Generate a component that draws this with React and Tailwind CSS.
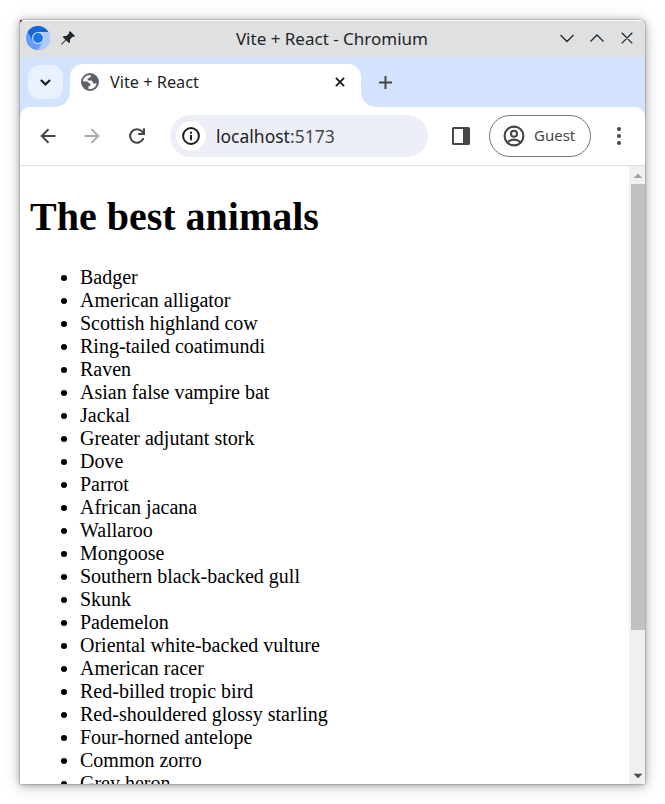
import React from "react";

const animals = [
  "Badger", "American alligator", "Scottish highland cow", "Ring-tailed coatimundi",
  "Raven", "Asian false vampire bat", "Jackal", "Greater adjutant stork", "Dove",
  "Parrot", "African jacana", "Wallaroo", "Mongoose", "Southern black-backed gull",
  "Skunk", "Pademelon", "Oriental white-backed vulture", "American racer",
  "Red-billed tropic bird", "Red-shouldered glossy starling", "Four-horned antelope",
  "Common zorro", "Grey heron",
];

function ChromiumLogo() {
  return (
    <svg width="24" height="24" viewBox="0 0 24 24">
      <circle cx="12" cy="12" r="12" fill="#669df6" />
      <path d="M12 12 17.2 15 12 24A12 12 0 0 0 22.4 6H12Z" fill="#aecbfa" />
      <path d="M12 12 6.8 15 1.6 6A12 12 0 0 1 22.4 6H12Z" fill="#1967d2" />
      <circle cx="12" cy="12" r="6" fill="#d2e3fc" />
      <circle cx="12" cy="12" r="4.9" fill="#1a73e8" />
    </svg>
  );
}

function PinIcon() {
  return (
    <svg width="14" height="14" viewBox="0 0 14 14" fill="#232629">
      <path d="M9 0 14 5 12.6 6.1 11.6 5.8 8.9 8.6 9 11.2 8 12.2 5.1 9.3 1 13.4 0 13.8 .4 12.8 4.4 8.7 1.7 6 2.8 5 5.4 5.1 8.2 2.3 7.9 1.2Z" />
    </svg>
  );
}

function GlobeIcon() {
  return (
    <svg width="18" height="18" viewBox="0 0 18 18">
      <circle cx="9" cy="9" r="9" fill="#5f6368" />
      <path d="M2 8.2A7 7 0 0 1 9.6 2V4.2L6.6 5.4V7.6H10.4L12 9.4V10.6H15.8A7 7 0 0 1 7.4 15.8V13.4L9.4 12.8V10.8L7.4 9.6 6.2 8.4Z" fill="#fff" />
    </svg>
  );
}

function Arrow({ className }) {
  return (
    <svg width="16" height="16" viewBox="0 0 16 16" fill="none" stroke="currentColor" strokeWidth="2" className={className}>
      <path d="M15.5 8H2M8.5 1.2 1.7 8l6.8 6.8" />
    </svg>
  );
}

function ReloadIcon() {
  return (
    <svg width="16" height="16" viewBox="0 0 16 16" fill="none" stroke="currentColor" strokeWidth="2.1">
      <path d="M14.4 10.2A6.8 6.8 0 1 1 13 3.4L14.6 5.2M15 .3V6H9.2" />
    </svg>
  );
}

function InfoIcon() {
  return (
    <svg width="18" height="18" viewBox="0 0 18 18" fill="none" stroke="#1f1f1f" strokeWidth="2">
      <circle cx="9" cy="9" r="7.9" />
      <path d="M9 8v5.2M9 4.8v1.9" />
    </svg>
  );
}

function TitleBar() {
  return (
    <div className="flex h-[37px] shrink-0 items-center border-t border-[#f8f8f8] bg-[#dee0e2] pb-0.5 pl-1.5 pr-[11px]">
      <ChromiumLogo />
      <div className="ml-[11px] mr-auto"><PinIcon /></div>
      <div className="mr-[132px] whitespace-nowrap pt-0.5 text-[17px] leading-6 text-[#232629]">Vite + React - Chromium</div>
      <svg width="74" height="14" viewBox="0 0 74 14" fill="none" stroke="#232629" strokeWidth="1.25">
        <path d="M.5 4 7 10.5 13.5 4M30.5 10.5 37 4l6.5 6.5M61.7 1.8l10.6 10.6M72.3 1.8 61.7 12.4" />
      </svg>
    </div>
  );
}

function Flare({ flip }) {
  return (
    <svg width="15" height="15" viewBox="0 0 15 15" className={flip ? "-scale-x-100" : ""}>
      <path d="M15 0v15H0A15 15 0 0 0 15 0Z" fill="#fff" />
    </svg>
  );
}

function TabStrip() {
  return (
    <div className="flex h-[50px] shrink-0 items-end bg-[#d3e3fd] pl-2">
      <div className="mb-2 flex h-[34px] w-[35px] items-center justify-center rounded-xl bg-[#eaf1fe]">
        <svg width="11" height="7" viewBox="0 0 11 7" fill="none" stroke="#1f1f1f" strokeWidth="2.2">
          <path d="M.9 1 5.5 5.4 10.1 1" />
        </svg>
      </div>
      <div className="-ml-2"><Flare /></div>
      <div className="flex h-[43px] w-[291px] items-center rounded-t-[13px] bg-white pb-[7px] pl-[11px] pr-[16px]">
        <GlobeIcon />
        <span className="ml-[11px] flex-1 text-[16.3px] leading-5 text-[#1f1f1f]">Vite + React</span>
        <svg width="10" height="10" viewBox="0 0 11 11" fill="none" stroke="#1f1f1f" strokeWidth="2.1">
          <path d="m1 1 9 9M10 1 1 10" />
        </svg>
      </div>
      <Flare flip />
      <svg width="13" height="13" viewBox="0 0 13 13" className="mb-[18px] ml-[3px]" stroke="#474747" strokeWidth="2">
        <path d="M6.5 0v13M0 6.5h13" />
      </svg>
    </div>
  );
}

function Toolbar() {
  return (
    <div className="shrink-0 bg-[#d3e3fd]">
      <div className="flex h-[59px] items-center rounded-t-[10px] border-b border-[#dddee0] bg-white pl-5 text-[#474747]">
        <Arrow />
        <Arrow className="ml-7 -scale-x-100 text-[#ababab]" />
        <div className="ml-[29px]"><ReloadIcon /></div>
        <div className="ml-[25px] flex h-[42px] w-[258px] items-center rounded-full bg-[#eceef8] pl-1.5">
          <div className="flex h-[30px] w-[30px] items-center justify-center rounded-full bg-white">
            <InfoIcon />
          </div>
          <span className="ml-2.5 text-[17.5px] leading-6 text-[#1f1f1f]">localhost<span className="text-[#474747]">:5173</span></span>
        </div>
        <svg width="18" height="18" viewBox="0 0 18 18" className="ml-6">
          <path fillRule="evenodd" fill="#474747" d="M1.5 0h15Q18 0 18 1.5v15q0 1.5-1.5 1.5h-15Q0 18 0 16.5v-15Q0 0 1.5 0ZM2 2v14h9V2Z" />
        </svg>
        <div className="ml-[19px] flex h-[42px] w-[102px] items-center rounded-full border border-[#747775] pl-3">
          <svg width="24" height="24" viewBox="0 0 24 24" fill="none" stroke="#474747" strokeWidth="2.1">
            <circle cx="12" cy="12" r="9.4" />
            <circle cx="12" cy="9.8" r="3" />
            <path d="M5.3 18.4Q12 13 18.7 18.4" />
          </svg>
          <span className="mb-0.5 ml-2 text-[15px] leading-5">Guest</span>
        </div>
        <svg width="4" height="18" viewBox="0 0 4 18" className="ml-[26px]" fill="#474747">
          <circle cx="2" cy="2" r="2" /><circle cx="2" cy="9" r="2" /><circle cx="2" cy="16" r="2" />
        </svg>
      </div>
    </div>
  );
}

function Scrollbar() {
  return (
    <div className="flex w-4 shrink-0 flex-col bg-[#f0f0f0] pl-0.5">
      <svg width="14" height="18" viewBox="0 0 14 18" className="shrink-0"><path d="m2.5 12 4.5-4.5 4.5 4.5Z" fill="#a3a3a3" /></svg>
      <div className="h-[446px] bg-[#c1c1c1]" />
      <svg width="14" height="18" viewBox="0 0 14 18" className="mt-auto shrink-0"><path d="m2.5 7.8 4.5 4.5 4.5-4.5Z" fill="#505050" /></svg>
    </div>
  );
}

export default function App() {
  return (
    <div className="h-[804px] w-[665px] overflow-hidden bg-white p-5 font-['Noto_Sans',sans-serif]">
      <div className="h-[764px] w-[625px] rounded-tr-[5px] bg-[#a51e5d] shadow-[0_0_2px_rgba(0,0,0,0.45),0_1px_9px_rgba(0,0,0,0.35),0_3px_22px_rgba(0,0,0,0.12)]">
        <div className="flex h-full flex-col overflow-hidden rounded-t-[5px] bg-white">
          <TitleBar />
          <TabStrip />
          <Toolbar />
          <div className="flex min-h-0 flex-1 overflow-hidden">
            <main className="min-w-0 flex-1 overflow-hidden pl-2.5 font-['Liberation_Serif',serif] text-black">
              <h1 className="mt-[28px] text-[40px] font-bold leading-[46px]">The best animals</h1>
              <ul className="mt-[26.4px] list-disc pl-[50px] text-[20px] leading-[23px]">
                {animals.map((name) => <li key={name}>{name}</li>)}
              </ul>
            </main>
            <Scrollbar />
          </div>
        </div>
      </div>
    </div>
  );
}
